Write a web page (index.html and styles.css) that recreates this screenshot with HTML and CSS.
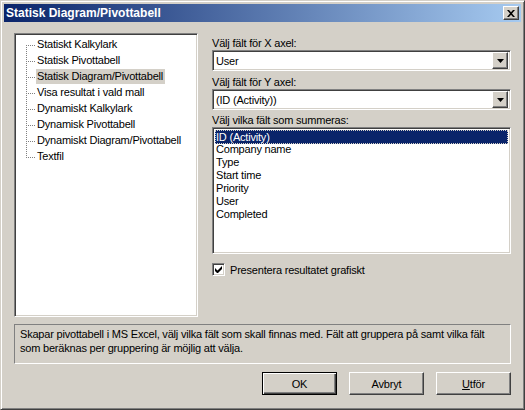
FILE: index.html
```html
<!DOCTYPE html>
<html>
<head>
<meta charset="utf-8">
<link rel="stylesheet" href="styles.css">
</head>
<body>
<div class="window">
  <div class="titlebar">
    <span class="title">Statisk Diagram/Pivottabell</span>
    <span class="close"><svg width="8" height="7" viewBox="0 0 8 7"><path d="M0 0h2l2 2.2L6 0h2L5 3.5 8 7H6L4 4.8 2 7H0l3-3.5z" fill="#000"/></svg></span>
  </div>
  <div class="client">
    <div class="main">
      <div class="tree sunken">
        <ul>
          <li class="first"><span class="conn"></span><span class="lbl">Statiskt Kalkylark</span></li>
          <li><span class="conn"></span><span class="lbl">Statisk Pivottabell</span></li>
          <li><span class="conn"></span><span class="lbl sel">Statisk Diagram/Pivottabell</span></li>
          <li><span class="conn"></span><span class="lbl">Visa resultat i vald mall</span></li>
          <li><span class="conn"></span><span class="lbl">Dynamiskt Kalkylark</span></li>
          <li><span class="conn"></span><span class="lbl">Dynamisk Pivottabell</span></li>
          <li><span class="conn"></span><span class="lbl">Dynamiskt Diagram/Pivottabell</span></li>
          <li class="last"><span class="conn"></span><span class="lbl">Textfil</span></li>
        </ul>
      </div>
      <div class="side">
        <div class="label">Välj fält för X axel:</div>
        <div class="combo sunken">
          <span class="val">User</span>
          <span class="drop raised"><svg width="7" height="4" viewBox="0 0 7 4"><path d="M0 0h7L3.5 4z" fill="#000"/></svg></span>
        </div>
        <div class="label">Välj fält för Y axel:</div>
        <div class="combo sunken combo-y">
          <span class="val">(ID (Activity))</span>
          <span class="drop raised"><svg width="7" height="4" viewBox="0 0 7 4"><path d="M0 0h7L3.5 4z" fill="#000"/></svg></span>
        </div>
        <div class="label">Välj vilka fält som summeras:</div>
        <div class="listbox sunken">
          <div class="item selected">ID (Activity)</div>
          <div class="item">Company name</div>
          <div class="item">Type</div>
          <div class="item">Start time</div>
          <div class="item">Priority</div>
          <div class="item">User</div>
          <div class="item">Completed</div>
        </div>
        <div class="check">
          <span class="box sunken"><svg width="7" height="7" viewBox="0 0 7 7"><path d="M0 2v3l2 2h1l4-4V0L2.5 4.5z" fill="#000"/></svg></span>
          <span>Presentera resultatet grafiskt</span>
        </div>
      </div>
    </div>
    <div class="desc">Skapar pivottabell i MS Excel, välj vilka fält som skall finnas med. Fält att gruppera på samt vilka fält<br>som beräknas per gruppering är möjlig att välja.</div>
    <div class="buttons">
      <span class="btn raised default">OK</span>
      <span class="btn raised">Avbryt</span>
      <span class="btn raised"><u>U</u>tför</span>
    </div>
  </div>
</div>
</body>
</html>
```

FILE: styles.css
```css
html, body {
  margin: 0;
  padding: 0;
  background: #d4d0c8;
}
body {
  font-family: "Liberation Sans", Arial, sans-serif;
  font-size: 11px;
  letter-spacing: -0.2px;
  color: #000;
}
.window {
  width: 525px;
  height: 410px;
  box-sizing: border-box;
  border: 1px solid;
  border-color: #d4d0c8 #404040 #404040 #d4d0c8;
  box-shadow: inset 1px 1px #fff, inset -1px -1px #808080;
  padding: 3px;
  background: #d4d0c8;
  display: flex;
  flex-direction: column;
}
.titlebar {
  height: 18px;
  flex: none;
  display: flex;
  align-items: center;
  justify-content: space-between;
  padding: 0 2px 0 2px;
  background: linear-gradient(to right, #0a246a, #a6caf0);
}
.title {
  color: #fff;
  font-weight: bold;
  font-size: 12px;
  letter-spacing: 0;
}
.close {
  width: 16px;
  height: 14px;
  box-sizing: border-box;
  background: #d4d0c8;
  border: 1px solid;
  border-color: #fff #404040 #404040 #fff;
  box-shadow: inset -1px -1px #808080;
  display: flex;
  align-items: center;
  justify-content: center;
}
.raised {
  border: 1px solid;
  border-color: #fff #404040 #404040 #fff;
  box-shadow: inset -1px -1px #808080, inset 1px 1px #d4d0c8;
  background: #d4d0c8;
}
.sunken {
  border: 1px solid;
  border-color: #808080 #fff #fff #808080;
  box-shadow: inset 1px 1px #404040, inset -1px -1px #d4d0c8;
}
.client {
  flex: 1;
  display: flex;
  flex-direction: column;
  padding: 11px 10px 0 10px;
}
.main {
  display: flex;
  height: 284px;
  gap: 14px;
}
.tree {
  width: 184px;
  box-sizing: border-box;
  background: #fff;
  padding: 2px;
}
.tree ul {
  list-style: none;
  margin: 0;
  padding: 1px 0 0 9px;
}
.tree li {
  display: flex;
  height: 16px;
  align-items: stretch;
}
.conn {
  width: 10px;
  flex: none;
  background-image:
    repeating-linear-gradient(to bottom, #808080 0 1px, transparent 1px 2px),
    repeating-linear-gradient(to right, #808080 0 1px, transparent 1px 2px);
  background-size: 1px 100%, 9px 1px;
  background-position: 0 0, 0 8px;
  background-repeat: no-repeat;
}
.tree li.first .conn {
  background-size: 1px 8px, 9px 1px;
  background-position: 0 8px, 0 8px;
}
.tree li.last .conn {
  background-size: 1px 9px, 9px 1px;
  background-position: 0 0, 0 8px;
}
.lbl {
  padding: 0 2px 0 1px;
  line-height: 15px;
  height: 15px;
  white-space: nowrap;
}
.lbl.sel {
  background: #d4d0c8;
}
.side {
  flex: 1;
  display: flex;
  flex-direction: column;
  padding-top: 4px;
}
.label {
  line-height: 13px;
  height: 13px;
}
.combo {
  height: 21px;
  box-sizing: border-box;
  background: #fff;
  display: flex;
  align-items: center;
  padding: 2px;
  margin-bottom: 5px;
}
.combo-y {
  margin-bottom: 4px;
}
.combo .val {
  flex: 1;
  padding-left: 1px;
}
.drop {
  width: 16px;
  height: 17px;
  box-sizing: border-box;
  display: flex;
  align-items: center;
  justify-content: center;
}
.listbox {
  height: 127px;
  box-sizing: border-box;
  background: #fff;
  padding: 2px;
}
.item {
  line-height: 13px;
  height: 13px;
  padding-left: 1px;
  white-space: nowrap;
}
.item.selected {
  background: #0a246a;
  color: #fff;
  outline: 1px dotted #d4d0c8;
  outline-offset: -1px;
  height: 14px;
  line-height: 14px;
  margin-bottom: -1px;
}
.check {
  display: flex;
  align-items: center;
  gap: 5px;
  margin-top: 9px;
  height: 13px;
}
.box {
  width: 13px;
  height: 13px;
  box-sizing: border-box;
  background: #fff;
  display: flex;
  align-items: center;
  justify-content: center;
}
.desc {
  margin-top: 7px;
  height: 40px;
  box-sizing: border-box;
  border: 1px solid;
  border-color: #808080 #fff #fff #808080;
  padding: 2px 2px 2px 5px;
  line-height: 14px;
  letter-spacing: -0.2px;
  white-space: nowrap;
  overflow: hidden;
}
.buttons {
  margin-top: 8px;
  display: flex;
  justify-content: flex-end;
  gap: 12px;
}
.btn {
  width: 75px;
  height: 23px;
  box-sizing: border-box;
  display: flex;
  align-items: center;
  justify-content: center;
}
.btn.default {
  border: 1px solid #000;
  box-shadow: inset 1px 1px #fff, inset -1px -1px #404040, inset -2px -2px #808080;
}
```
